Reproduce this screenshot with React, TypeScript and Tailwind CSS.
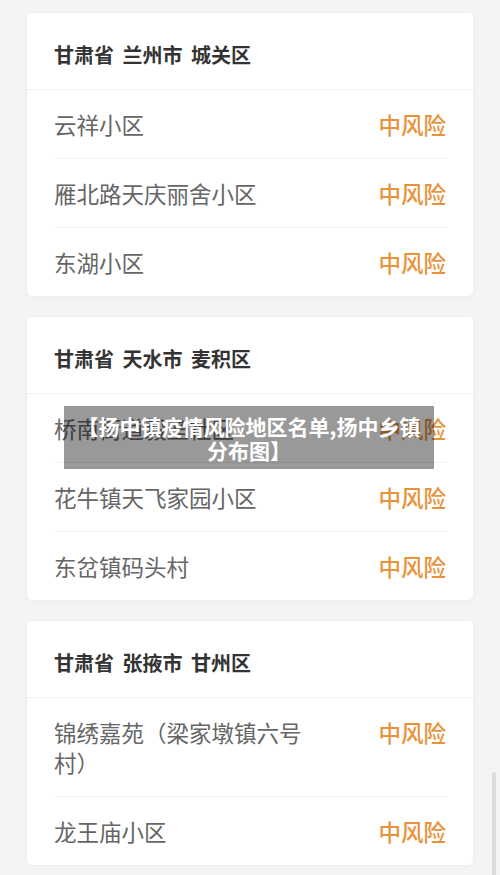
const groups = [
  {
    title: "甘肃省 兰州市 城关区",
    items: ["云祥小区", "雁北路天庆丽舍小区", "东湖小区"],
  },
  {
    title: "甘肃省 天水市 麦积区",
    items: ["桥南街道毅垒社区", "花牛镇天飞家园小区", "东岔镇码头村"],
  },
  {
    title: "甘肃省 张掖市 甘州区",
    items: ["锦绣嘉苑（梁家墩镇六号村）", "龙王庙小区"],
  },
];

export default function App() {
  return (
    <div
      className="relative h-[875px] overflow-hidden bg-[#f4f4f4] pt-[13px]"
      style={{ fontFamily: '"Noto Sans CJK SC", "Noto Sans", sans-serif' }}
    >
      <div className="flex flex-col gap-[21px]">
        {groups.map((g) => (
          <div
            key={g.title}
            className="mx-[27px] rounded-[5px] bg-white shadow-[0_1px_6px_rgba(0,0,0,0.04)]"
          >
            {/* Region header */}
            <div className="flex h-[77px] items-center border-b border-[#f0f0f0] px-[27px] pt-[7px]">
              <span className="text-[20px] font-bold text-[#333] [word-spacing:4px]">
                {g.title}
              </span>
            </div>

            {/* Area rows */}
            <div className="px-[27px]">
              {g.items.map((name, i) => (
                <div
                  key={name}
                  className={`flex items-start justify-between pt-[19px] ${
                    i < g.items.length - 1
                      ? "border-b border-[#f0f0f0] pb-[19px]"
                      : "pb-[19px]"
                  }`}
                >
                  <span className="max-w-[268px] text-[22.5px] leading-[30px] text-[#666]">
                    {name}
                  </span>
                  <span className="text-[22.5px] font-medium leading-[30px] text-[#e8923a]">
                    中风险
                  </span>
                </div>
              ))}
            </div>
          </div>
        ))}
      </div>

      {/* Title overlay */}
      <div className="absolute left-[64px] top-[406px] flex h-[63px] w-[370px] items-center justify-center bg-black/40 px-[8px]">
        <p className="text-center text-[21px] font-bold leading-[24px] text-white">
          【扬中镇疫情风险地区名单,扬中乡镇分布图】
        </p>
      </div>

      {/* Scrollbar */}
      <div className="absolute right-[4px] top-[772px] h-[110px] w-[4px] rounded-full bg-[#dcdcdc]" />
    </div>
  );
}
